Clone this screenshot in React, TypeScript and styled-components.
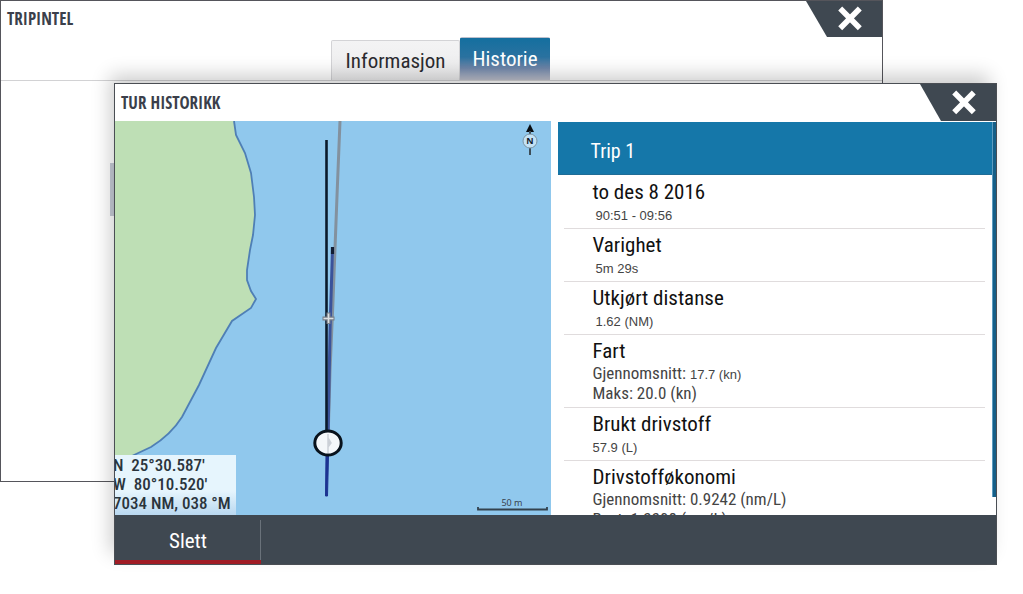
import React from 'react';
import styled, { createGlobalStyle } from 'styled-components';

const condensed = '"Roboto Condensed", Roboto, "Noto Sans", sans-serif';
const slate = '#3f4851';

const GlobalStyle = createGlobalStyle`
  * { box-sizing: border-box; }
  body { margin: 0; background: #fff; color: #111; font-family: ${condensed}; }
  button { font: inherit; border: 0; padding: 0; margin: 0; cursor: pointer; }
  h1, h2, h3, p, dl, dt, dd, ul { margin: 0; padding: 0; font-weight: 400; }
`;

const Desktop = styled.div`
  position: relative;
  min-height: 594px;
  overflow: hidden;
`;

const BackWindow = styled.section`
  width: calc(100% - 140px);
  min-height: 482px;
  background: #fff;
  border: 1px solid #55555b;
`;

const FrontWindow = styled.section`
  position: absolute;
  top: 83px;
  left: 114px;
  right: 26px;
  background: #fff;
  border: 1px solid #4a4e54;
  box-shadow: -6px -10px 18px -2px rgba(0, 0, 0, 0.2);
`;

const TitleBar = styled.header<{ $height: number }>`
  display: flex;
  justify-content: space-between;
  align-items: center;
  height: ${p => p.$height}px;
  padding-left: 6px;
`;

const Title = styled.h1`
  font: 700 17px/24px "Open Sans Condensed", ${condensed};
  color: #3b3f4b;
`;

const CloseButton = styled.button`
  display: flex;
  align-items: center;
  align-self: stretch;
  justify-content: center;
  width: 76px;
  padding-left: 11px;
  background: ${slate};
  clip-path: polygon(0 0, 100% 0, 100% 100%, 21px 100%);
`;

const Tabs = styled.nav`
  display: flex;
  justify-content: center;
  align-items: flex-end;
  height: 44px;
  padding-right: 2px;
  border-bottom: 1px solid #d2d2d4;
`;

const Tab = styled.button<{ $active?: boolean }>`
  width: ${p => (p.$active ? 90 : 129)}px;
  height: ${p => (p.$active ? 43 : 40)}px;
  font-size: 21px;
  line-height: 38px;
  color: ${p => (p.$active ? '#fff' : '#2b2b2f')};
  background: ${p =>
    p.$active
      ? 'linear-gradient(#146f9f, #2a72a0 45%, #6f86a9 72%, #c0c2ce)'
      : 'linear-gradient(#f3f3f4, #ececed)'};
  border: 1px solid ${p => (p.$active ? 'transparent' : '#d3d3d6')};
  border-bottom: 0;
  border-radius: 2px 2px 0 0;
`;

const BackBody = styled.div`
  padding: 82px 0 0 109px;
`;

const BackEntry = styled.div`
  height: 53px;
  background: #c6cbd6;
`;

const Body = styled.div`
  display: grid;
  grid-template-columns: calc(50% - 5px) minmax(0, 1fr);
  column-gap: 7px;
  height: 394px;
`;

const MapPane = styled.div`
  position: relative;
  overflow: hidden;
  background: #90c8ed;
`;

const Chart = styled.svg`
  display: block;
  width: 100%;
  height: 100%;
`;

const Position = styled.div`
  position: absolute;
  left: 0;
  bottom: 0;
  width: 121px;
  height: 60px;
  padding-top: 1px;
  overflow: hidden;
  background: linear-gradient(#e6f5fd 60%, #b9d8f0);
  color: #2a343c;
  white-space: pre;
`;

const PositionLine = styled.p`
  margin-left: -2px;
  font: 500 17px/19px ${condensed};
`;

const Details = styled.div`
  display: flex;
  overflow: hidden;
`;

const DetailList = styled.div`
  flex: 1;
  overflow: hidden;
`;

const TripHeading = styled.h2`
  height: 53px;
  padding: 3px 33px 0;
  margin-top: 1px;
  background: #1577a9;
  border-bottom: 1px solid #1f6c96;
  color: #fff;
  font-size: 20px;
  line-height: 52px;
`;

const Rows = styled.dl`
  padding: 1px 7px 0 6px;
`;

const Row = styled.div`
  padding: 4px 0 4px 29px;
  border-bottom: 1px solid #e0dcdd;
`;

const Name = styled.dt`
  font-size: 21px;
  line-height: 24px;
`;

const Value = styled.dd<{ $indent?: boolean }>`
  padding-left: ${p => (p.$indent ? 3 : 0)}px;
  color: #444;
  font-size: 17px;
  line-height: 20px;
  white-space: nowrap;
`;

const Reading = styled.span`
  font: 13px "Liberation Sans", Arial, sans-serif;
`;

const ScrollTrack = styled.div`
  width: 4px;
  padding-top: 1px;
`;

const ScrollThumb = styled.div`
  height: 375px;
  background: #155f88;
  border-left: 1px solid #5d9cc0;
`;

const Footer = styled.footer`
  display: flex;
  height: 49px;
  background: ${slate};
`;

const DeleteButton = styled.button`
  width: 146px;
  padding-top: 6px;
  color: #fff;
  font-size: 21px;
  line-height: 38px;
  background: linear-gradient(#6a727a, #6a727a) right 0 top 5px / 1px 40px no-repeat ${slate};
  border-bottom: 4px solid #a01c25;
`;

const Cross = () => (
  <svg width="26" height="26" viewBox="0 0 26 26" aria-hidden="true">
    <path d="M3.2 2.6 22.8 22.2M22.8 2.6 3.2 22.2" stroke="#fff" strokeWidth="5.6" />
  </svg>
);

const coast =
  'M119 0 L121 14 L130 32 L136 52 L139 76 L140 94 L138 114 L135 129 L132 149 L132 159 L136 170 L141 178 L136 187 L117 200 L101 227 L84 264 L67 296 C57 312 44 321 36 326 L19 334 L0 343';

const TripMap = () => (
  <Chart viewBox="0 0 436 394" preserveAspectRatio="xMinYMin slice" role="img" aria-label="Kart">
    <path d={`${coast} L0 0Z`} fill="#bedfb5" />
    <path d={coast} fill="none" stroke="#4f7fb5" strokeWidth="1.8" />
    <path d="M225 0 L222 75 L218 180 L215 250 L213 320" fill="none" stroke="#83919e" strokeWidth="3" />
    <path d="M217.5 128 L215 210 L213 320" fill="none" stroke="#3a539b" strokeWidth="3" />
    <path d="M217.5 126V133" stroke="#111c33" strokeWidth="3.2" />
    <path d="M211.5 19V312" stroke="#0a1a2a" strokeWidth="2.6" />
    <path d="M211 334 L213.5 334 L212.5 375 L210.5 375Z" fill="#1c3391" stroke="#1c3391" />
    <path d="M213.5 191.5V203M207.5 197.5H219.5" stroke="#777f88" strokeWidth="4" />
    <path d="M213.5 192.5V202M208.5 197.5H218.5" stroke="#dcdfe2" strokeWidth="1.6" />
    <ellipse cx="213" cy="322" rx="13.2" ry="12" fill="#f4f7fa" stroke="#08121c" strokeWidth="3" />
    <path d="M213 313V332M213 317l3 5-3 4z" fill="#c9ced6" stroke="#ccd1d8" strokeWidth="1.5" />
    <path d="M415 3 L419 11 H411Z" fill="#080c10" />
    <path d="M415 10V14M415 27V34" stroke="#3d4d58" strokeWidth="2" />
    <circle cx="415" cy="20" r="7" fill="#c3e2f5" stroke="#7b95a6" />
    <text x="415" y="23" textAnchor="middle" fontFamily="Open Sans" fontWeight="700" fontSize="9" fill="#13232f">N</text>
    <text x="397" y="385" textAnchor="middle" fontFamily="Noto Sans" fontSize="9" fill="#39444d">50 m</text>
    <path d="M363 386V388.5H432V386" fill="none" stroke="#33424e" strokeWidth="1.8" />
  </Chart>
);

type Detail = { name: string; lines: { label?: string; reading?: string; indent?: boolean }[] };

const details: Detail[] = [
  { name: 'to des 8 2016', lines: [{ reading: '90:51 - 09:56', indent: true }] },
  { name: 'Varighet', lines: [{ reading: '5m 29s', indent: true }] },
  { name: 'Utkjørt distanse', lines: [{ reading: '1.62 (NM)', indent: true }] },
  { name: 'Fart', lines: [{ label: 'Gjennomsnitt: ', reading: '17.7 (kn)' }, { label: 'Maks: 20.0 (kn)' }] },
  { name: 'Brukt drivstoff', lines: [{ reading: '57.9 (L)' }] },
  { name: 'Drivstofføkonomi', lines: [{ label: 'Gjennomsnitt: 0.9242 (nm/L)' }, { label: 'Best: 1.3308 (nm/L)' }] },
];

export default function App() {
  return (
    <Desktop>
      <GlobalStyle />
      <BackWindow>
        <TitleBar $height={36}>
          <Title>TRIPINTEL</Title>
          <CloseButton aria-label="Lukk TripIntel"><Cross /></CloseButton>
        </TitleBar>
        <Tabs>
          <Tab>Informasjon</Tab>
          <Tab $active>Historie</Tab>
        </Tabs>
        <BackBody><BackEntry /></BackBody>
      </BackWindow>

      <FrontWindow>
        <TitleBar $height={37}>
          <Title as="h2">TUR HISTORIKK</Title>
          <CloseButton aria-label="Lukk tur historikk"><Cross /></CloseButton>
        </TitleBar>
        <Body>
          <MapPane>
            <TripMap />
            <Position>
              <PositionLine>{"N  25°30.587'"}</PositionLine>
              <PositionLine>{"W  80°10.520'"}</PositionLine>
              <PositionLine>7034 NM, 038 °M</PositionLine>
            </Position>
          </MapPane>
          <Details>
            <DetailList>
              <TripHeading>Trip 1</TripHeading>
              <Rows>
                {details.map(d => (
                  <Row key={d.name}>
                    <Name>{d.name}</Name>
                    {d.lines.map((l, i) => (
                      <Value key={i} $indent={l.indent}>
                        {l.label}
                        {l.reading && <Reading>{l.reading}</Reading>}
                      </Value>
                    ))}
                  </Row>
                ))}
              </Rows>
            </DetailList>
            <ScrollTrack><ScrollThumb /></ScrollTrack>
          </Details>
        </Body>
        <Footer>
          <DeleteButton>Slett</DeleteButton>
        </Footer>
      </FrontWindow>
    </Desktop>
  );
}
